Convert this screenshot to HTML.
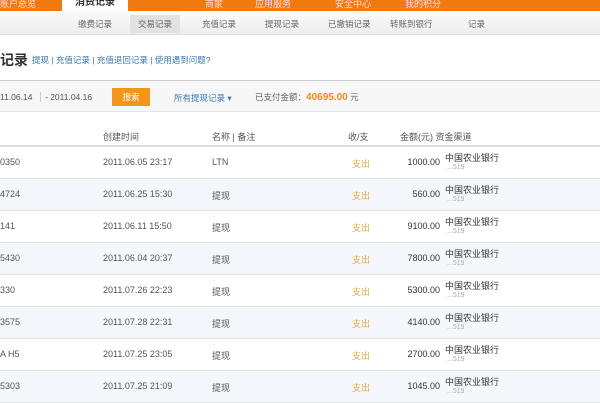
<!DOCTYPE html><html><head><meta charset="utf-8"><style>
*{margin:0;padding:0;box-sizing:border-box}
body{width:600px;height:400px;overflow:hidden;background:#fff;font-family:"Liberation Sans","Noto Sans CJK SC",sans-serif;font-size:9px;color:#555;position:relative}
.top{position:absolute;left:0;top:0;width:600px;height:11px;background:#f07a10}
.tab{position:absolute;top:0;height:12px;background:#fff;left:62px;width:66px;font-weight:bold;color:#333;text-align:center;font-size:10px;line-height:6px}
.tt{position:absolute;top:-3px;color:#fde;font-size:9px}
.sub{position:absolute;top:11px;left:0;width:600px;height:24px;background:linear-gradient(#fafafa,#eee);border-bottom:1px solid #ddd}
.sub span{position:absolute;top:7px;font-size:8.5px;color:#666}
.sub .on{background:#e2e2e2;top:4px;height:18px;padding:3px 8px}
.title{position:absolute;left:0;top:50px;font-size:14px;font-weight:bold;color:#333}
.links{position:absolute;left:32px;top:54px;font-size:8.5px;color:#3a7ab0}
.bar{position:absolute;left:0;top:80px;width:600px;height:32px;background:#f7f7f7;border-top:1px solid #ccc;border-bottom:1px solid #e5e5e5}
.bar span{position:absolute;top:11px;font-size:8.5px}
.btn{position:absolute;left:112px;top:7px;width:38px;height:18px;background:#f3941c;color:#fff;text-align:center;line-height:18px;font-size:8.5px}
.hdr{position:absolute;left:0;top:120px;width:600px;height:27px;border-bottom:2px solid #ddd}
.row{position:absolute;left:0;width:600px;height:32px;border-bottom:1px solid #e3e3e3}
.row.a{background:#f5f8fb}
.c{position:absolute;font-size:9px;color:#555}
.s{color:#e3a44a}
.amt{text-align:right;width:60px;left:380px;color:#333}
.bank{left:445px;color:#333;font-size:9px}
.sm{left:447px;color:#aaa;font-size:7px}
</style></head><body>
<div class="top"><span class="tt" style="left:0">账户总览</span><span class="tt" style="left:205px">商家</span><span class="tt" style="left:255px">应用服务</span><span class="tt" style="left:335px">安全中心</span><span class="tt" style="left:405px">我的积分</span></div>
<div class="tab">消费记录</div>
<div class="sub"><span style="left:78px">缴费记录</span><span class="on" style="left:130px;top:4px">交易记录</span><span style="left:202px">充值记录</span><span style="left:265px">提现记录</span><span style="left:328px">已撤销记录</span><span style="left:390px">转账到银行</span><span style="left:468px">记录</span></div>
<div class="title">记录</div>
<div class="links">提现 | 充值记录 | 充值退回记录 | 使用遇到问题?</div>
<div class="bar"><span style="left:0">11.06.14</span><span style="left:40px;border-left:1px solid #ccc;padding-left:4px">- 2011.04.16</span><div class="btn">搜索</div><span style="left:174px;color:#3a7ab0">所有提现记录 ▾</span><span style="left:255px;color:#666;top:10px">已支付金额：<b style="color:#f08a1c;font-size:10px">40695.00</b> 元</span></div>
<div class="hdr"><span class="c" style="left:103px;top:10px">创建时间</span><span class="c" style="left:212px;top:10px">名称 | 备注</span><span class="c" style="left:348px;top:10px">收/支</span><span class="c" style="left:400px;top:10px">金额(元) 资金渠道</span></div>
<div class="row" style="top:147px"><span class="c" style="left:0;top:10px">0350</span><span class="c" style="left:103px;top:10px">2011.06.05 23:17</span><span class="c" style="left:212px;top:10px">LTN</span><span class="c s" style="left:352px;top:10px">支出</span><span class="c amt" style="top:10px">1000.00</span><span class="c bank" style="top:4px">中国农业银行</span><span class="c sm" style="top:17px">...519</span></div>
<div class="row a" style="top:179px"><span class="c" style="left:0;top:10px">4724</span><span class="c" style="left:103px;top:10px">2011.06.25 15:30</span><span class="c" style="left:212px;top:10px">提现</span><span class="c s" style="left:352px;top:10px">支出</span><span class="c amt" style="top:10px">560.00</span><span class="c bank" style="top:4px">中国农业银行</span><span class="c sm" style="top:17px">...519</span></div>
<div class="row" style="top:211px"><span class="c" style="left:0;top:10px">141</span><span class="c" style="left:103px;top:10px">2011.06.11 15:50</span><span class="c" style="left:212px;top:10px">提现</span><span class="c s" style="left:352px;top:10px">支出</span><span class="c amt" style="top:10px">9100.00</span><span class="c bank" style="top:4px">中国农业银行</span><span class="c sm" style="top:17px">...519</span></div>
<div class="row a" style="top:243px"><span class="c" style="left:0;top:10px">5430</span><span class="c" style="left:103px;top:10px">2011.06.04 20:37</span><span class="c" style="left:212px;top:10px">提现</span><span class="c s" style="left:352px;top:10px">支出</span><span class="c amt" style="top:10px">7800.00</span><span class="c bank" style="top:4px">中国农业银行</span><span class="c sm" style="top:17px">...519</span></div>
<div class="row" style="top:275px"><span class="c" style="left:0;top:10px">330</span><span class="c" style="left:103px;top:10px">2011.07.26 22:23</span><span class="c" style="left:212px;top:10px">提现</span><span class="c s" style="left:352px;top:10px">支出</span><span class="c amt" style="top:10px">5300.00</span><span class="c bank" style="top:4px">中国农业银行</span><span class="c sm" style="top:17px">...519</span></div>
<div class="row a" style="top:307px"><span class="c" style="left:0;top:10px">3575</span><span class="c" style="left:103px;top:10px">2011.07.28 22:31</span><span class="c" style="left:212px;top:10px">提现</span><span class="c s" style="left:352px;top:10px">支出</span><span class="c amt" style="top:10px">4140.00</span><span class="c bank" style="top:4px">中国农业银行</span><span class="c sm" style="top:17px">...519</span></div>
<div class="row" style="top:339px"><span class="c" style="left:0;top:10px">A H5</span><span class="c" style="left:103px;top:10px">2011.07.25 23:05</span><span class="c" style="left:212px;top:10px">提现</span><span class="c s" style="left:352px;top:10px">支出</span><span class="c amt" style="top:10px">2700.00</span><span class="c bank" style="top:4px">中国农业银行</span><span class="c sm" style="top:17px">...519</span></div>
<div class="row a" style="top:371px"><span class="c" style="left:0;top:10px">5303</span><span class="c" style="left:103px;top:10px">2011.07.25 21:09</span><span class="c" style="left:212px;top:10px">提现</span><span class="c s" style="left:352px;top:10px">支出</span><span class="c amt" style="top:10px">1045.00</span><span class="c bank" style="top:4px">中国农业银行</span><span class="c sm" style="top:17px">...519</span></div>
</body></html>
